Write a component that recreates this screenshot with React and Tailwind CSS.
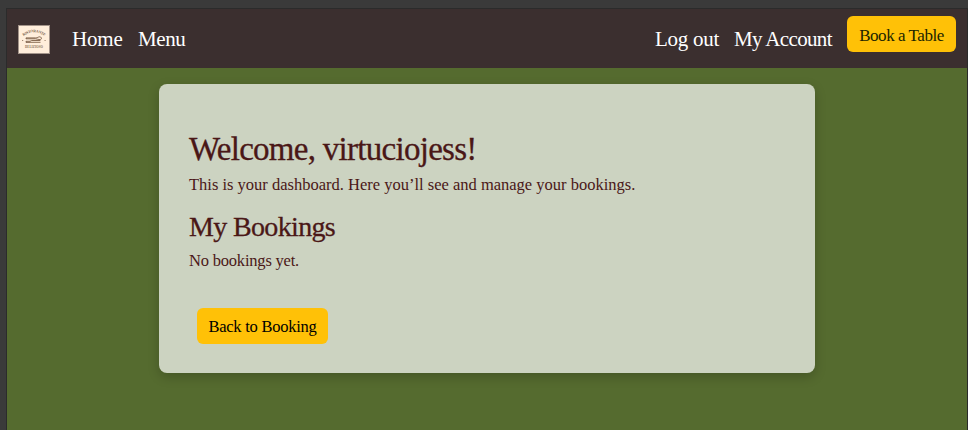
function Logo() {
  return (
    <svg viewBox="0 0 32 29" className="block h-[29px] w-8 shrink-0" aria-label="Ristorante Delizioso">
      <rect x="0.5" y="0.5" width="31" height="28" fill="#ffeedb" stroke="#a3948a" />
      <defs>
        <path id="arc" d="M5.5 11.2 Q16 3.2 26.5 11.2" />
      </defs>
      <text fontSize="3.8" fill="#806650" fontFamily="Liberation Serif, serif" fontWeight="bold">
        <textPath href="#arc" textLength="23">RISTORANTE</textPath>
      </text>
      <g fill="none" stroke="#6b4b33" strokeWidth="0.8">
        <path d="M8 12.9h9.5c2 0 2.8-1.1 4.3-1.1 1.8 0 2.3 2.9.3 2.9-1.6 0-2.6-.9-4.6-.9H8z" />
        <path d="M8 16.3h4l1.6-.8h8.7M12 17.3h10.5M8 16.3v1.1h4" />
      </g>
      <path d="M4 15.5h1.2M26.5 15.5h1.2" stroke="#8a7058" strokeWidth="0.8" />
      <text x="7" y="23.2" textLength="18" fontSize="3.1" fill="#8a7058" fontFamily="Liberation Serif, serif" fontWeight="bold">
        DELIZIOSO
      </text>
    </svg>
  );
}

export default function App() {
  return (
    <div className="h-[430px] overflow-hidden bg-[#3a3a3a] pt-2 pl-1.5 font-['Liberation_Serif',serif]">
      <div className="flex h-full flex-col border border-b-0 border-[#2b2b2b] bg-[#556b2f]">
        <header className="flex h-[59px] shrink-0 items-start justify-between bg-[#3b2f2f] px-[11px] text-[21px] leading-[30px] text-white">
          <nav className="flex">
            <div className="mr-[22px] pt-4"><Logo /></div>
            <a className="mt-[15px] w-[66px] whitespace-nowrap tracking-[-0.2px]">Home</a>
            <a className="mt-[15px] tracking-[-0.4px]">Menu</a>
          </nav>
          <nav className="flex whitespace-nowrap">
            <a className="mt-[15px] w-[79px] tracking-[-0.25px]">Log out</a>
            <a className="mt-[15px] w-[113px] tracking-[-0.65px]">My Account</a>
            <button className="mt-[7px] h-9 w-[109px] rounded-md bg-[#ffc107] pt-1 text-[17px] leading-6 tracking-[-0.45px] text-[#212500]">Book a Table</button>
          </nav>
        </header>
        <main className="mt-4 ml-[152px] flex h-[289.4px] w-[656.4px] flex-col items-start rounded-lg bg-[#ccd3c1] px-[30px] pt-[46px] whitespace-nowrap text-[#4a1717] shadow-[0_4px_12px_rgba(0,0,0,0.2)]">
          <h1 className="text-[33px] leading-[38px] tracking-[-0.72px] [-webkit-text-stroke:0.3px_#4a1717]">Welcome, virtuciojess!</h1>
          <p className="mt-[5px] text-[16.5px] leading-6">This is your dashboard. Here you’ll see and manage your bookings.</p>
          <h2 className="mt-[13px] text-[28px] leading-[34px] tracking-[-0.65px] [-webkit-text-stroke:0.3px_#4a1717]">My Bookings</h2>
          <p className="mt-[5px] text-[16.5px] leading-6 tracking-[-0.2px]">No bookings yet.</p>
          <button className="mt-[35px] ml-2 h-9 w-[131px] rounded-md bg-[#ffc107] pt-0.5 text-[16.5px] leading-6 tracking-[-0.25px] text-black">Back to Booking</button>
        </main>
      </div>
    </div>
  );
}
